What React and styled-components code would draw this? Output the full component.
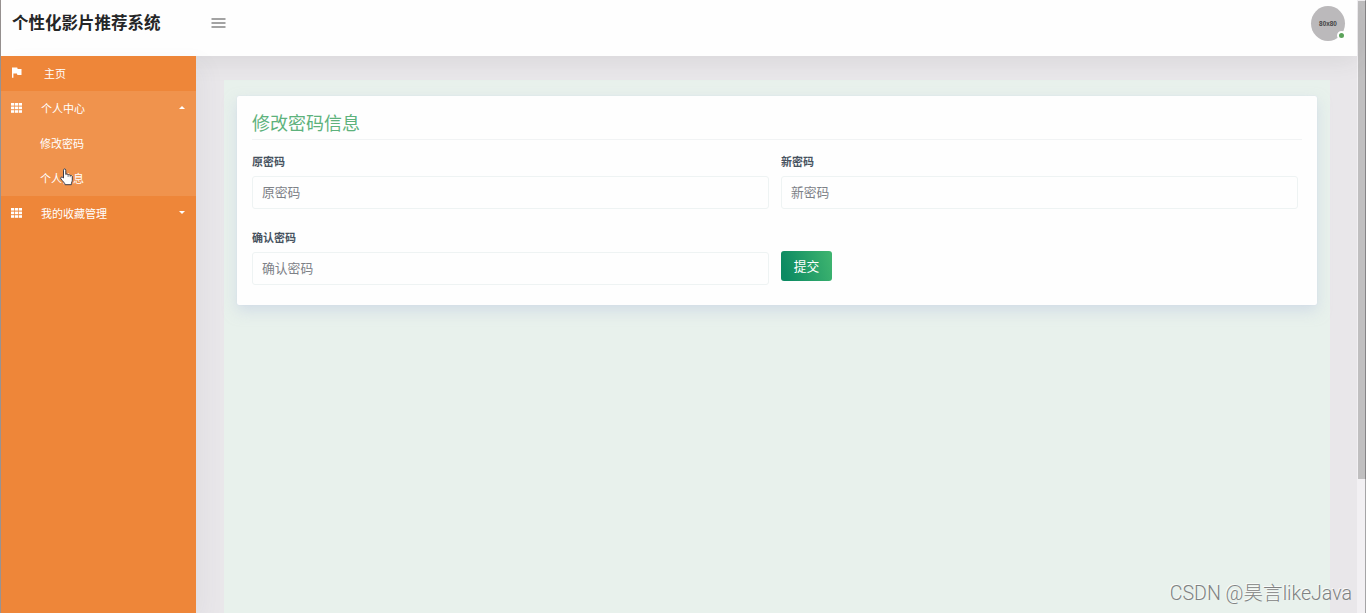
import React, { useState } from 'react';
import styled, { createGlobalStyle } from 'styled-components';

const theme = {
  orange: '#ee8639',
  orangeLight: '#f0934d',
  green: '#5db27c',
  page: '#e9e7ea',
  mint: '#e8f1ec',
  label: '#475260'
};

const GlobalStyle = createGlobalStyle`
  * {
    box-sizing: border-box;
  }

  body {
    margin: 0;
    overflow: hidden;
    font-family: "Noto Sans CJK SC", "Noto Sans", sans-serif;
  }
`;

const Screen = styled.div`
  position: relative;
  display: flex;
  height: 613px;
  overflow: hidden;
  background: ${theme.page};
`;

const Page = styled.div`
  flex: 1;
  display: flex;
  flex-direction: column;
  min-width: 0;
  border-left: 1px solid rgba(90, 80, 75, 0.55);
  background: ${theme.page};
  background-clip: padding-box;
`;

const Header = styled.header`
  position: relative;
  z-index: 1;
  display: flex;
  flex: none;
  height: 56px;
  padding: 6px 12px 0 11px;
  background: #fefefe;
  box-shadow: 0 4px 24px rgba(60, 60, 60, 0.1);
`;

const Brand = styled.h1`
  width: 199px;
  margin: 0;
  color: #252627;
  font-size: 16.5px;
  font-weight: 700;
  line-height: 33px;
  white-space: nowrap;
`;

const MenuButton = styled.button`
  display: flex;
  align-items: center;
  height: 34px;
  padding: 0;
  border: 0;
  background: none;
  cursor: pointer;
`;

const Avatar = styled.div`
  position: relative;
  display: flex;
  align-items: center;
  justify-content: center;
  width: 34px;
  height: 35px;
  margin-left: auto;
  border-radius: 50%;
  background: #bbb9bb;
  color: #444;
  font: bold 6.4px "Liberation Sans", sans-serif;
`;

const Online = styled.span`
  position: absolute;
  right: -1px;
  bottom: 1px;
  width: 9px;
  height: 9px;
  border: 2px solid #fff;
  border-radius: 50%;
  background: #5ba35a;
`;

const Body = styled.div`
  display: flex;
  flex: 1;
  min-height: 0;
`;

const Sidebar = styled.nav`
  position: relative;
  z-index: 2;
  flex: none;
  width: 195px;
  background: ${theme.orange};
  box-shadow: 8px 8px 22px rgba(80, 80, 90, 0.05);
`;

const MenuGroup = styled.div`
  background: ${(props) => (props.$open ? theme.orangeLight : 'transparent')};
`;

const MenuItem = styled.div`
  display: flex;
  align-items: center;
  height: 35px;
  padding: 0 11px 2px 10px;
  color: #fff;
  font-size: 11px;
  cursor: pointer;

  svg {
    flex: none;
  }
`;

const MenuText = styled.span`
  flex: 1;
  margin-left: ${(props) => (props.$wide ? 22 : 19)}px;
`;

const SubItem = styled.div`
  height: 35px;
  padding-left: 39px;
  color: #fff;
  font-size: 11px;
  line-height: 35px;
`;

const Main = styled.main`
  flex: 1;
  display: flex;
  padding: 24px 27px 0 28px;
`;

const Panel = styled.div`
  flex: 1;
  padding: 16px 13px 0;
  background: ${theme.mint};
`;

const Card = styled.section`
  height: 209px;
  padding: 12px 15px 0;
  border-radius: 2px;
  background: #fefefe;
  box-shadow: 0 0 1px #cbd5e8, 0 6px 14px rgba(190, 202, 225, 0.5);
`;

const Title = styled.h2`
  height: 32px;
  margin: 0;
  border-bottom: 1px solid #f1f3f4;
  color: ${theme.green};
  font-size: 18px;
  font-weight: 400;
  line-height: 28px;
`;

const Form = styled.form`
  display: grid;
  grid-template-columns: 517px 517px;
  column-gap: 12px;
  row-gap: 20px;
  margin-top: 13px;
`;

const Label = styled.label`
  display: block;
  height: 23px;
  color: ${theme.label};
  font-size: 11px;
  font-weight: 700;
  line-height: 16px;
`;

const Input = styled.input`
  display: block;
  width: 100%;
  height: 33px;
  padding: 0 9px 2px;
  border: 1px solid #eef3f3;
  border-radius: 3px;
  outline: none;
  background: #fefefe;
  font-family: inherit;
  font-size: 12.8px;

  &::placeholder {
    color: #7d8187;
    opacity: 1;
  }
`;

const SubmitButton = styled.button`
  width: 51px;
  height: 30px;
  margin-top: 22px;
  padding: 0;
  border: 0;
  border-radius: 3px;
  background: linear-gradient(75deg, #0c8a62 10%, #3db36f 95%);
  color: #fff;
  font-family: inherit;
  font-size: 12.8px;
  line-height: 30px;
  cursor: pointer;
`;

const ScrollTrack = styled.div`
  flex: none;
  width: 9px;
  padding: 1px 0 0 1px;
  border-right: 1px solid #a5a4a6;
  background: #f2f0f3;
`;

const ScrollThumb = styled.div`
  width: 8px;
  height: 478px;
  border-right: 1px solid #858486;
  background: #c0bfc0;
`;

const Watermark = styled.div`
  position: absolute;
  z-index: 3;
  right: 14px;
  bottom: 4px;
  color: #7f8282;
  font-family: Roboto, "Noto Sans CJK SC", sans-serif;
  font-size: 19.6px;
  font-weight: 300;
  line-height: 30px;
  text-shadow: -1px -1px 0 rgba(255, 255, 255, 0.75);
  white-space: nowrap;
`;

const Pointer = styled.svg`
  position: absolute;
  z-index: 4;
  left: 60px;
  top: 168px;
`;

const GridIcon = () => (
  <svg width="11" height="10" viewBox="0 0 11 10" fill="#fff">
    {[0, 3.6, 7.2].map((y) =>
      [0, 3.9, 7.8].map((x) => <rect key={`${x}-${y}`} x={x} y={y} width="3.2" height="2.6" />)
    )}
  </svg>
);

const FlagIcon = () => (
  <svg width="11" height="11" viewBox="0 0 11 11" fill="#fff">
    <path d="M1 0.5h5.2l.5 1.4H10.5v6H6.4L5.9 6.500H2.400v4.200H1z" />
  </svg>
);

const Caret = ({ open }) => (
  <svg width="6" height="3" viewBox="0 0 6 3" fill="#fff">
    <path d={open ? 'M0 3l3-3 3 3z' : 'M0 0l3 3 3-3z'} />
  </svg>
);

const menus = [
  { name: '个人中心', items: ['修改密码', '个人信息'] },
  { name: '我的收藏管理', items: ['我的收藏'] }
];

const fields = ['原密码', '新密码', '确认密码'];

function App() {
  const [opened, setOpened] = useState('个人中心');

  const toggleMenu = (name) => {
    setOpened(opened === name ? '' : name);
  };

  return (
    <Screen>
      <GlobalStyle />
      <Page>
        <Header>
          <Brand>个性化影片推荐系统</Brand>
          <MenuButton type="button" aria-label="menu">
            <svg width="15" height="10" viewBox="0 0 15 10" stroke="#858585" strokeWidth="1.4">
              <path d="M0.500 1h14M0.500 5h14M0.500 9h14" />
            </svg>
          </MenuButton>
          <Avatar>
            80x80
            <Online />
          </Avatar>
        </Header>
        <Body>
          <Sidebar>
            <MenuItem>
              <FlagIcon />
              <MenuText $wide>主页</MenuText>
            </MenuItem>
            {menus.map((menu) => (
              <MenuGroup key={menu.name} $open={opened === menu.name}>
                <MenuItem onClick={() => toggleMenu(menu.name)}>
                  <GridIcon />
                  <MenuText>{menu.name}</MenuText>
                  <Caret open={opened === menu.name} />
                </MenuItem>
                {opened === menu.name &&
                  menu.items.map((item) => <SubItem key={item}>{item}</SubItem>)}
              </MenuGroup>
            ))}
          </Sidebar>
          <Main>
            <Panel>
              <Card>
                <Title>修改密码信息</Title>
                <Form onSubmit={(e) => e.preventDefault()}>
                  {fields.map((field) => (
                    <div key={field}>
                      <Label>{field}</Label>
                      <Input type="text" placeholder={field} />
                    </div>
                  ))}
                  <SubmitButton type="submit">提交</SubmitButton>
                </Form>
              </Card>
            </Panel>
          </Main>
        </Body>
      </Page>
      <ScrollTrack>
        <ScrollThumb />
      </ScrollTrack>
      <Watermark>CSDN @昊言likeJava</Watermark>
      <Pointer width="14" height="18" viewBox="0 0 14 18">
        <path
          d="M3.500 10V2.200c0-1.800 2.300-1.800 2.300 0V6.500c.5-.8 2-.6 2.200.4.700-.6 1.900-.3 2.100.6.900-.4 2.200 0 2.200 1.300v3.400c0 1.300-1 2.200-1 4.500H5.100c0-1.500-2.300-3.200-4.200-5.800-.9-1.500.9-2.600 2.600-.9z"
          fill="#fff"
          stroke="#3b3a45"
        />
        <path d="M8.100 7v2M10.200 7.600v1.600" stroke="#3b3a45" strokeWidth="0.6" />
      </Pointer>
    </Screen>
  );
}

export default App;
